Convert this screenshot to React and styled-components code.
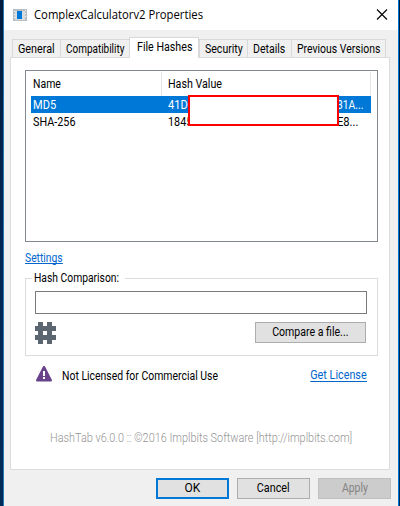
import React from "react";
import styled, { createGlobalStyle } from "styled-components";

const Global = createGlobalStyle`
  *{box-sizing:border-box}
  body{margin:0;overflow:hidden;background:#001d43}
  button,input{font:inherit;border-radius:0;margin:0;padding:0}
`;
const Desktop = styled.div`
  width:400px;height:506px;padding:0 1px 0 3px;
  background:linear-gradient(#001c3d,#002552 45%,#002b59);
  font:12px/16px Roboto,sans-serif;color:#000;
`;
const Window = styled.main`
  height:506px;border:solid #0078d7;border-width:0 1px;background:#f0f0f0;
  border-left-color:#2178b5;display:flex;flex-direction:column;
`;
const TitleBar = styled.header`
  height:30px;background:#fff;display:flex;align-items:center;padding:0 9px;flex:none;
  svg{flex:none}
`;
const Title = styled.h1`
  margin:0 auto 0 7px;font:12px/16px "Open Sans",sans-serif;
`;
const Label = styled.span`
  display:inline-block;white-space:nowrap;
  transform:scaleX(${p => p.$stretch || 1});transform-origin:${p => p.$origin || "left"};
`;
const Close = styled.button`
  border:0;background:none;width:12px;height:12px;display:flex;margin-right:1px;
`;
const Tabs = styled.nav`
  height:27px;padding:7px 0 0 6px;display:flex;align-items:flex-end;margin-left:2px;flex:none;
`;
const Tab = styled.div`
  width:${p => p.$w}px;height:${p => p.$active ? 21 : 18}px;
  padding:${p => p.$active ? "1px 0 0 7px" : "1px 0 0 5px"};
  margin-bottom:${p => p.$active ? -1 : 0}px;
  border:1px solid #d9d9d9;border-bottom:0;
  border-right-width:${p => p.$last || p.$active ? 1 : 0}px;
  background:${p => p.$active ? "#fff" : "#f0f0f0"};
  position:relative;z-index:1;
  & + &{border-left-width:${p => p.$after ? 0 : 1}px}
`;
const Panel = styled.section`
  width:380px;height:413px;margin-left:6px;border:1px solid #dcdcdc;background:#fff;
  padding:12px 11px 0 14px;display:flex;flex-direction:column;flex:none;
`;
const List = styled.div`
  width:353px;height:172px;border:1px solid #828790;padding:1px 6px 0 5px;position:relative;flex:none;
`;
const Row = styled.div`
  display:grid;grid-template-columns:128px 1fr 34px;
  height:17px;line-height:18px;padding-left:2px;
  color:${p => p.$selected ? "#fff" : "#000"};
  background:${p => p.$selected ? "#0078d7" : "transparent"};
`;
const Cell = styled.div`
  padding-left:${p => p.$value ? 7 : 0}px;white-space:nowrap;
`;
const Header = styled(Row)`
  height:24px;line-height:24px;border-right:1px solid #e5e5e5;
  ${Cell}:nth-child(2){border-left:1px solid #e5e5e5;padding-left:6px}
`;
const Redaction = styled.div`
  position:absolute;left:162px;top:24px;width:151px;height:31px;border:2px solid #f00;background:#fff;
`;
const Link = styled.a`
  color:#0066cc;text-decoration:none;border-bottom:1px solid currentColor;height:14px;line-height:14px;
  white-space:nowrap;transform:scaleX(${p => p.$stretch});transform-origin:${p => p.$origin || "left"};
`;
const LinkRow = styled.div`
  display:flex;height:35px;padding-top:9px;flex:none;
  ${Link}{height:13px}
`;
const Group = styled.fieldset`
  width:353px;height:86px;border:1px solid #dcdcdc;margin:-7px 0 0;padding:0 10px 0 9px;
  min-width:0;flex:none;
`;
const Legend = styled.legend`
  padding:0 0 0 2px;margin-left:-3px;width:93px;height:16px;
`;
const Input = styled.input`
  display:block;width:332px;height:23px;border:1px solid #7a7a7a;background:#fff;margin-top:5px;outline:0;
`;
const GroupFooter = styled.div`display:flex;justify-content:space-between;padding:8px 1px 0 0;`;
const Button = styled.button`
  width:${p => p.$w || 73}px;height:21px;line-height:17px;color:${p => p.disabled ? "#838383" : "#000"};
  border:${p => p.$primary ? "2px solid #0078d7" : `1px solid ${p.disabled ? "#bfbfbf" : "#adadad"}`};
  background:${p => p.disabled ? "#ccc" : "#e1e1e1"};
`;
const License = styled.div`
  display:flex;align-items:center;height:18px;margin-top:9px;padding:0 11px 0 11px;flex:none;
  & > ${Label}{margin:3px auto 0 10px}
  & > ${Link}{margin-top:2px}
`;
const Version = styled.footer`
  margin:47px 0 0 25px;color:#949494;font-weight:300;white-space:nowrap;
`;
const Actions = styled.div`display:flex;gap:8px;justify-content:flex-end;padding:8px 7px 0 0;`;

const AppIcon = () => <svg width="14" height="12" viewBox="0 0 14 12" shapeRendering="crispEdges">
  <path fill="#b9bec3" d="M0 0h14v12H0z"/><path fill="#d9dcdf" d="M2 2h10v9H2z"/>
  <path fill="#0078d7" d="M4 2h5v8H4z"/><path fill="#f4f4f4" d="M1 2h1v1H1zm0 3h1v1H1zm0 3h1v1H1zm11-7h1v1h-1zm0 3h1v1h-1zm0 3h1v1h-1z"/>
</svg>;
const CloseIcon = () => <svg width="12" height="12" viewBox="0 0 12 12"><path d="M1 .5l10 10M11 .5L1 10.5" fill="none" stroke="#000" strokeWidth="1.1"/></svg>;
const HashIcon = () => <svg width="21" height="22" viewBox="0 0 21 22">
  <path fill="#5b6670" fillRule="evenodd" d="M3 0h5v4h4V0h5v4h4v5h-4v4h4v5h-4v4h-5v-4H8v4H3v-4H0v-5h3V9H0V4h3zM8 9v4h4V9z"/>
</svg>;
const Warning = () => <svg width="16" height="16" viewBox="0 0 16 16">
  <path fill="#68428a" d="M8 0c.7 0 1 .5 1.3 1l6.4 12.5c.7 1.2.1 2.1-1.2 2.1h-13C.2 15.6-.4 14.7.3 13.5L6.7 1C7 .5 7.3 0 8 0z"/>
  <path fill="#fff" d="M7 5h2v5H7zm0 6h2v2H7z"/>
</svg>;

const tabs = [
  { name: "General", width: 48, stretch: .9 },
  { name: "Compatibility", width: 69, stretch: .83 },
  { name: "File Hashes", width: 70, stretch: .89, active: true },
  { name: "Security", width: 48, stretch: .88, after: true },
  { name: "Details", width: 44, stretch: .88 },
  { name: "Previous Versions", width: 95, stretch: .87, last: true },
];

export default function App() {
  return <><Global/><Desktop><Window>
    <TitleBar><AppIcon/><Title><Label $stretch={.94}>ComplexCalculatorv2 Properties</Label></Title><Close aria-label="Close"><CloseIcon/></Close></TitleBar>
    <Tabs>{tabs.map(t => <Tab key={t.name} $w={t.width} $active={t.active} $after={t.after} $last={t.last}><Label $stretch={t.stretch}>{t.name}</Label></Tab>)}</Tabs>
    <Panel>
      <List>
        <Header><Cell><Label $stretch={.87}>Name</Label></Cell><Cell $value><Label $stretch={.89}>Hash Value</Label></Cell><Cell/></Header>
        <Row $selected><Cell><Label $stretch={.92}>MD5</Label></Cell><Cell $value><Label $stretch={.93}>41D</Label></Cell><Cell><Label $stretch={.86}>31A...</Label></Cell></Row>
        <Row><Cell><Label $stretch={.9}>SHA-256</Label></Cell><Cell $value><Label $stretch={.9}>1845</Label></Cell><Cell><Label $stretch={.93}>E8...</Label></Cell></Row>
        <Redaction/>
      </List>
      <LinkRow><Link $stretch={.86}>Settings</Link></LinkRow>
      <Group><Legend><Label $stretch={.86}>Hash Comparison:</Label></Legend><Input aria-label="Hash Comparison"/>
        <GroupFooter><HashIcon/><Button $w={111}><Label $stretch={.88} $origin="center">Compare a file...</Label></Button></GroupFooter>
      </Group>
      <License><Warning/><Label $stretch={.87}>Not Licensed for Commercial Use</Label><Link $stretch={.9} $origin="right">Get License</Link></License>
      <Version><Label $stretch={.907}>HashTab v6.0.0 :: ©2016 Implbits Software [http://implbits.com]</Label></Version>
    </Panel>
    <Actions>
      <Button $primary>OK</Button>
      <Button><Label $stretch={.9} $origin="center">Cancel</Label></Button>
      <Button disabled><Label $stretch={.87} $origin="center">Apply</Label></Button>
    </Actions>
  </Window></Desktop></>;
}
